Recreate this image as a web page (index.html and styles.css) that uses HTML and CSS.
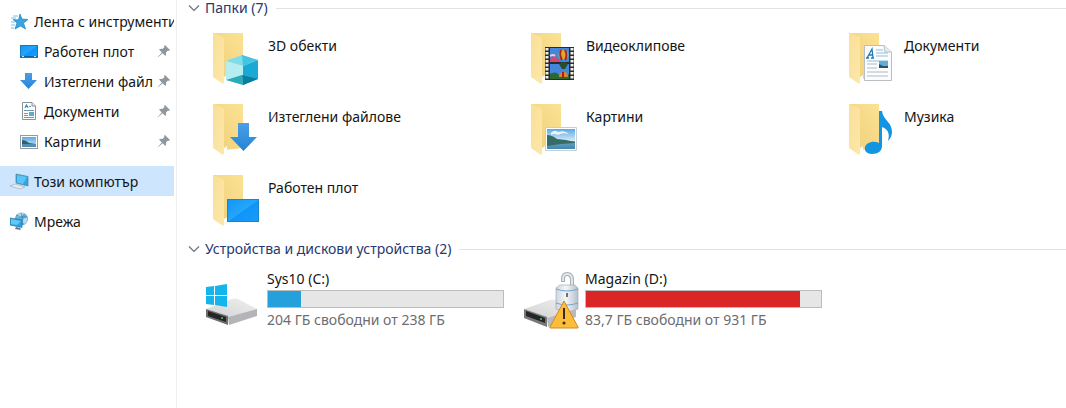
FILE: index.html
```html
<!DOCTYPE html>
<html lang="bg">
<head>
<meta charset="utf-8">
<title>Този компютър</title>
<link rel="stylesheet" href="styles.css">
</head>
<body>
<svg class="defs" aria-hidden="true">
  <defs>
    <linearGradient id="flap" x1="0" y1="0" x2="1" y2="1"><stop offset="0" stop-color="#f9df97"/><stop offset="1" stop-color="#fde8ac"/></linearGradient>
    <linearGradient id="back" x1="1" y1="0" x2="0" y2="1"><stop offset="0" stop-color="#fbe294"/><stop offset="1" stop-color="#efcf79"/></linearGradient>
    <linearGradient id="screen" x1="0" y1="0" x2="1" y2="1"><stop offset="0" stop-color="#1296f5"/><stop offset=".5" stop-color="#25a6fc"/><stop offset=".52" stop-color="#0f94f8"/><stop offset="1" stop-color="#1a9cf8"/></linearGradient>
    <linearGradient id="arrow" x1="0" y1="0" x2="0" y2="1"><stop offset="0" stop-color="#4a9fe6"/><stop offset="1" stop-color="#2584d6"/></linearGradient>
    <linearGradient id="sky" x1="0" y1="0" x2="0" y2="1"><stop offset="0" stop-color="#5ba9e6"/><stop offset="1" stop-color="#d6ebf6"/></linearGradient>
    <linearGradient id="water" x1="0" y1="0" x2="0" y2="1"><stop offset="0" stop-color="#6fa9c0"/><stop offset="1" stop-color="#3f86b0"/></linearGradient>
    <linearGradient id="top" x1="0" y1="1" x2="1" y2="0"><stop offset="0" stop-color="#d2d2d4"/><stop offset="1" stop-color="#f0f0f1"/></linearGradient>
    <linearGradient id="steel" x1="0" y1="0" x2="1" y2="0"><stop offset="0" stop-color="#cfd6dd"/><stop offset=".45" stop-color="#f4f6f8"/><stop offset="1" stop-color="#b4bfca"/></linearGradient>
    <symbol id="folder" viewBox="0 0 60 60">
      <path d="M9 3H39V47L20 49Z" fill="url(#back)"/>
      <path d="M9 3L19 7Q20 8 20 10V47L22 49L19 54L9 47Z" fill="url(#flap)"/>
      <path d="M20 47L23 45V51L20 52Z" fill="#fffdf5"/>
    </symbol>
    <symbol id="pin" viewBox="0 0 14 14">
      <path d="M8 1L13 6L12 7L11 6.600L9 8.600Q9.500 10.500 8.500 12L5.600 9.200L1 13.200L.8 13L4.800 8.400L2 5.600Q3.500 4.500 5.400 5L7.500 3L7 2Z" fill="#8f979e"/>
    </symbol>
    <symbol id="chevron" viewBox="0 0 12 12"><path d="M1 3.500L6 8.500L11 3.500" fill="none" stroke="#6c7179" stroke-width="1.200"/></symbol>
  </defs>
</svg>
<div class="explorer">
  <nav class="sidebar">
    <a class="nav-item" href="#quick">
      <svg class="nav-icon" viewBox="0 0 20 20"><path d="M10 3L12 8L18 8.500L13.500 12L15.500 18L10.500 15L5 18L7 12L3 8.500L8.500 9Z" fill="#39a4df" stroke="#2183bd" stroke-width=".7"/><path d="M3 5H8M1 7H6M1 11H5M1 14H5M1 17H4" stroke="#7cc3e9"/></svg>
      <span class="nav-text">Лента с инструменти</span>
    </a>
    <a class="nav-item child" href="#desktop">
      <svg class="nav-icon" viewBox="0 0 20 20"><rect x="1.500" y="4.500" width="17" height="12" fill="url(#screen)" stroke="#1478bc"/><path d="M2 15.500H18" stroke="#0868ad"/><path d="M3 15.500H5M15 15.500H17" stroke="#c4e6ff"/></svg>
      <span class="nav-text">Работен плот</span><svg class="pin"><use href="#pin"/></svg>
    </a>
    <a class="nav-item child" href="#downloads">
      <svg class="nav-icon" viewBox="0 0 20 20"><path d="M6 2H13V9H18L9.500 18L1 9H6Z" fill="url(#arrow)"/></svg>
      <span class="nav-text">Изтеглени файл</span><svg class="pin"><use href="#pin"/></svg>
    </a>
    <a class="nav-item child" href="#documents">
      <svg class="nav-icon" viewBox="0 0 20 20"><path d="M3.500 1.500H13L16.500 5V18.500H3.500Z" fill="#fcfdfd" stroke="#8b9398"/><path d="M13 1.500V5H16.500" fill="#e5e9eb" stroke="#8b9398"/><path d="M6 7L7.500 3.500L9 7M6 5.500H9" fill="none" stroke="#268bbd"/><path d="M10 5.500H12M5 9.500H15M5 12.500H9M5 14.500H9M5 16.500H15" stroke="#7398ac"/><path d="M10 11H15V15H10Z" fill="#5cabcf"/></svg>
      <span class="nav-text">Документи</span><svg class="pin"><use href="#pin"/></svg>
    </a>
    <a class="nav-item child" href="#pictures">
      <svg class="nav-icon" viewBox="0 0 20 20"><rect x="1.500" y="4.500" width="17" height="13" fill="#fff" stroke="#949ba0"/><path d="M3 6H17V16H3Z" fill="url(#sky)"/><path d="M3 9Q7 9 10 12L17 13V14H3Z" fill="#315f67"/><path d="M3 13H17V16H3Z" fill="#558dae"/></svg>
      <span class="nav-text">Картини</span><svg class="pin"><use href="#pin"/></svg>
    </a>
    <a class="nav-item spaced selected" href="#computer" aria-current="page">
      <svg class="nav-icon" viewBox="0 0 20 20"><path d="M6 3L18 5.500V15L6 12Z" fill="#2ba5ec" stroke="#5e7d91" stroke-width=".7"/><path d="M7 4L17 6L13 13L7 11.500Z" fill="#5cc4f6"/><path d="M0 15L5 13L15 16L10 18Z" fill="#e6eaee" stroke="#a7b2ba" stroke-width=".7"/></svg>
      <span class="nav-text">Този компютър</span>
    </a>
    <a class="nav-item spaced" href="#network">
      <svg class="nav-icon" viewBox="0 0 20 20"><circle cx="11.500" cy="8" r="6.500" fill="#5eb1dc"/><path d="M7 4Q10 1 14 2L11 6L8 6ZM13 8L17 6Q18 10 15 13L12 11Z" fill="#b4dceb"/><path d="M6 4Q11 7 17 6M11 2Q14 8 12 14" fill="none" stroke="#3880a8" stroke-width=".7"/><path d="M0 7L12 9V16.500L0 14Z" fill="#2ba0e7" stroke="#327094" stroke-width=".7"/><path d="M1 8L11 10L7 14L1 13Z" fill="#63c6f6"/><path d="M6 16L5 18L11 19L10 17Z" fill="#547b92"/></svg>
      <span class="nav-text">Мрежа</span>
    </a>
  </nav>
  <main class="content">
    <section>
      <h2 class="group-title"><svg class="chevron"><use href="#chevron"/></svg>Папки (7)</h2>
      <div class="tiles">
        <a class="tile" href="#3d">
          <svg class="icon" viewBox="0 0 60 60"><use href="#folder"/><path d="M38 25L54 30L39 36L22 31Z" fill="#7edceb"/><path d="M22 31L39 36V55L22 50Z" fill="#b5edf1"/><path d="M39 36L54 30V49L39 55Z" fill="#1aa9d5"/><path d="M38 25L54 30L39 36Z" fill="#43c4e0"/><path d="M22 50L38 45L39 55Z" fill="#2cabb9"/><path d="M38 45L54 49L39 55Z" fill="#087f9e"/></svg>
          <span>3D обекти</span>
        </a>
        <a class="tile" href="#videos">
          <svg class="icon" viewBox="0 0 60 60"><use href="#folder"/><path d="M23 17H52V50H23Z" fill="#272b31"/><path d="M25 18V50M50 18V50" stroke="#f1f1e5" stroke-width="3" stroke-dasharray="2.500 1.500"/><path d="M28 18H47V32H28ZM28 34H47V49H28Z" fill="#4386dc"/><path d="M28 29Q32 24 35 28L39 32H28Z" fill="#d34a68"/><path d="M28 26Q31 24 33 26" stroke="#f3c3d0" stroke-width="2" fill="none"/><path d="M28 44Q34 40 38 46L47 44V49H28Z" fill="#2e6632"/><circle cx="41.500" cy="25" r="5" fill="#e0aa25"/><path d="M39 20Q37 25 40 30M43 20Q46 25 43 30" stroke="#a52627" stroke-width="2" fill="none"/><path d="M37 34Q42 30 46 34L43 39H40Z" fill="#254f2b"/><path d="M37 47Q37 42 42 42Q46 42 46 47Z" fill="#dc8726"/><path d="M41 42V48" stroke="#a12023" stroke-width="2"/></svg>
          <span>Видеоклипове</span>
        </a>
        <a class="tile" href="#documents">
          <svg class="icon" viewBox="0 0 60 60"><use href="#folder"/><path d="M24.500 15.500H44L51.500 22V50.500H24.500Z" fill="#fbfcfd" stroke="#b9bec2"/><path d="M44 15.500L45 22H51.500" fill="#e9edef" stroke="#b9bec2"/><path d="M27 28L32 19L33 28M29 25H33M26 28H29M31 28H34" fill="none" stroke="#2778b0" stroke-width="1.300"/><path d="M36 20H43M36 23H48M36 26H48M27 31H48" stroke="#93bfdc"/><path d="M27 34H37M27 38H37M27 42H48M27 46H48" stroke="#b3b9be"/><path d="M39 31H48V38H39Z" fill="#64acd8"/><path d="M39 34L43 36H48V38H39Z" fill="#29566b"/></svg>
          <span>Документи</span>
        </a>
        <a class="tile" href="#downloads">
          <svg class="icon" viewBox="0 0 60 60"><use href="#folder"/><path d="M34 22H45V36H53L39.500 50L26 36H34Z" fill="url(#arrow)"/></svg>
          <span>Изтеглени файлове</span>
        </a>
        <a class="tile" href="#pictures">
          <svg class="icon" viewBox="0 0 60 60"><use href="#folder"/><path d="M23.500 26.500H54.500V49.500H23.500Z" fill="#fff" stroke="#c4d0d7"/><path d="M25 28H53V40H25Z" fill="url(#sky)"/><path d="M29 32Q32 28 36 31Q43 29 47 33Q40 31 36 34Q32 32 29 34Z" fill="#e8f4fb"/><path d="M25 40H53V48H25Z" fill="url(#water)"/><path d="M25 34Q30 34 35 38L44 39L53 41V42L39 43L25 45Z" fill="#366b66"/></svg>
          <span>Картини</span>
        </a>
        <a class="tile" href="#music">
          <svg class="icon" viewBox="0 0 60 60"><use href="#folder"/><path d="M39 10H42C43 19 52 21 52 31Q52 36 48 40Q51 29 42 26V45C42 50 38 53 32 53C27 53 24 50 25 46C26 42 33 39 39 42Z" fill="#1296e3"/></svg>
          <span>Музика</span>
        </a>
        <a class="tile" href="#desktop">
          <svg class="icon" viewBox="0 0 60 60"><use href="#folder"/><rect x="23.500" y="27.500" width="31" height="22" fill="url(#screen)" stroke="#1786cc"/></svg>
          <span>Работен плот</span>
        </a>
      </div>
    </section>
    <section>
      <h2 class="group-title"><svg class="chevron"><use href="#chevron"/></svg>Устройства и дискови устройства (2)</h2>
      <div class="tiles drives">
        <a class="tile" href="#c">
          <svg class="icon" viewBox="0 0 60 60"><path d="M2 40L28 30Q31 29 34 30L53 40L24 48Z" fill="url(#top)"/><path d="M24 48L53 40V47L25 56Z" fill="#b3b4b7"/><path d="M2 40L24 47V56L2 48Z" fill="#6c6e70"/><path d="M4 42L22 48V53L4 47Z" fill="#232526"/><circle cx="18" cy="49" r="1" fill="#52c46c"/><path d="M2 18L10 17V26H2ZM11 17L23 15V26H11ZM2 27H10V36L2 35ZM11 27H23V38L11 36Z" fill="#13b5ec"/></svg>
          <span class="drive">
            <span id="c-name">Sys10 (C:)</span>
            <span class="bar" role="meter" aria-labelledby="c-name" aria-valuenow="14" aria-valuemin="0" aria-valuemax="100"><span class="fill" style="width:14%"></span></span>
            <span class="free">204 ГБ свободни от 238 ГБ</span>
          </span>
        </a>
        <a class="tile" href="#d">
          <svg class="icon" viewBox="0 0 60 60"><path d="M2 40L28 31Q31 30 34 31L54 40L25 49Z" fill="url(#top)"/><path d="M25 49L54 40V48L26 58Z" fill="#b9babd"/><path d="M2 40L25 48V58L2 49Z" fill="#77797a"/><path d="M4 42L23 49V54L4 47Z" fill="#232526"/><circle cx="19" cy="50" r="1" fill="#52c46c"/><path d="M41 13V10Q41 5 45 5Q50 5 50 11V20" fill="none" stroke="#a9afb5" stroke-width="4"/><path d="M41 12V10Q41 5 45 5Q50 5 50 11V20" fill="none" stroke="#e2e6e9" stroke-width="2"/><path d="M34 19L38 16H53L56 19V40Q46 45 34 40Z" fill="url(#steel)" stroke="#a3adb8" stroke-width=".7"/><path d="M34 20Q45 24 56 20M34 34Q45 38 56 34" fill="none" stroke="#6fa3cf"/><path d="M45 24V28" stroke="#68737f" stroke-width="2"/><path d="M42 32L56 58Q57 59 55 59H29Q27 59 28 58Z" fill="#fbbd3b" stroke="#d18a1e"/><path d="M42 39V50" stroke="#3c2c15" stroke-width="2"/><circle cx="42" cy="54" r="1.500" fill="#3c2c15"/></svg>
          <span class="drive">
            <span id="d-name">Magazin (D:)</span>
            <span class="bar" role="meter" aria-labelledby="d-name" aria-valuenow="91" aria-valuemin="0" aria-valuemax="100"><span class="fill full" style="width:91%"></span></span>
            <span class="free">83,7 ГБ свободни от 931 ГБ</span>
          </span>
        </a>
      </div>
    </section>
  </main>
</div>
</body>
</html>
```
FILE: styles.css
```css
* { box-sizing: border-box; }
body {
  margin: 0;
  background: #fff;
  color: #151515;
  font: 14px/20px "Noto Sans", "Open Sans", sans-serif;
}
a { color: inherit; text-decoration: none; }
svg { display: block; flex: none; }
.defs { position: absolute; width: 0; height: 0; }
.explorer { display: flex; min-height: 100vh; }
.sidebar {
  flex: none;
  width: 177px;
  padding: 6px 2px 0 0;
  border-right: 1px solid #efefef;
}
.nav-item {
  display: flex;
  align-items: center;
  height: 30px;
  padding-left: 10px;
}
.nav-item.child { padding-left: 19px; padding-right: 3px; }
.nav-item.spaced { margin-top: 10px; }
.selected { background: #cde6fe; }
.nav-icon { width: 20px; height: 20px; margin-right: 4px; }
.child .nav-icon { margin-right: 5px; }
.nav-text { flex: 1; min-width: 0; overflow: hidden; white-space: nowrap; line-height: 22px; padding-top: 1px; }
.pin { width: 14px; height: 14px; }
.content { flex: 1; min-width: 0; }
.group-title {
  display: flex;
  align-items: center;
  height: 20px;
  margin: 0 0 0 11px;
  color: #26396f;
  font-size: 14px;
  font-weight: 400;
}
.content section:first-child .group-title { margin-top: -2px; }
.group-title::after {
  content: "";
  flex: 1;
  height: 1px;
  margin-left: 8px;
  background: #e2e2e2;
}
.chevron { width: 12px; height: 12px; margin-right: 5px; }
.tiles {
  display: grid;
  grid-template-columns: 318px 318px minmax(0, 1fr);
  grid-auto-rows: 67px;
  row-gap: 4px;
  padding: 12px 0 0 27px;
}
.tile { display: flex; gap: 4px; }
.tile > span { padding-top: 6px; }
.icon { width: 60px; height: 60px; }
.drives { padding-top: 10px; }
.tile > .drive { display: flex; flex-direction: column; width: 237px; margin-left: -1px; padding: 0; }
.bar {
  height: 18px;
  margin: 1px 0 2px;
  border: 1px solid #bcbcbc;
  background: #e6e6e6;
}
.fill { display: block; height: 100%; background: #26a0da; }
.fill.full { background: #da2626; }
.free { color: #6d6d6d; }
```
